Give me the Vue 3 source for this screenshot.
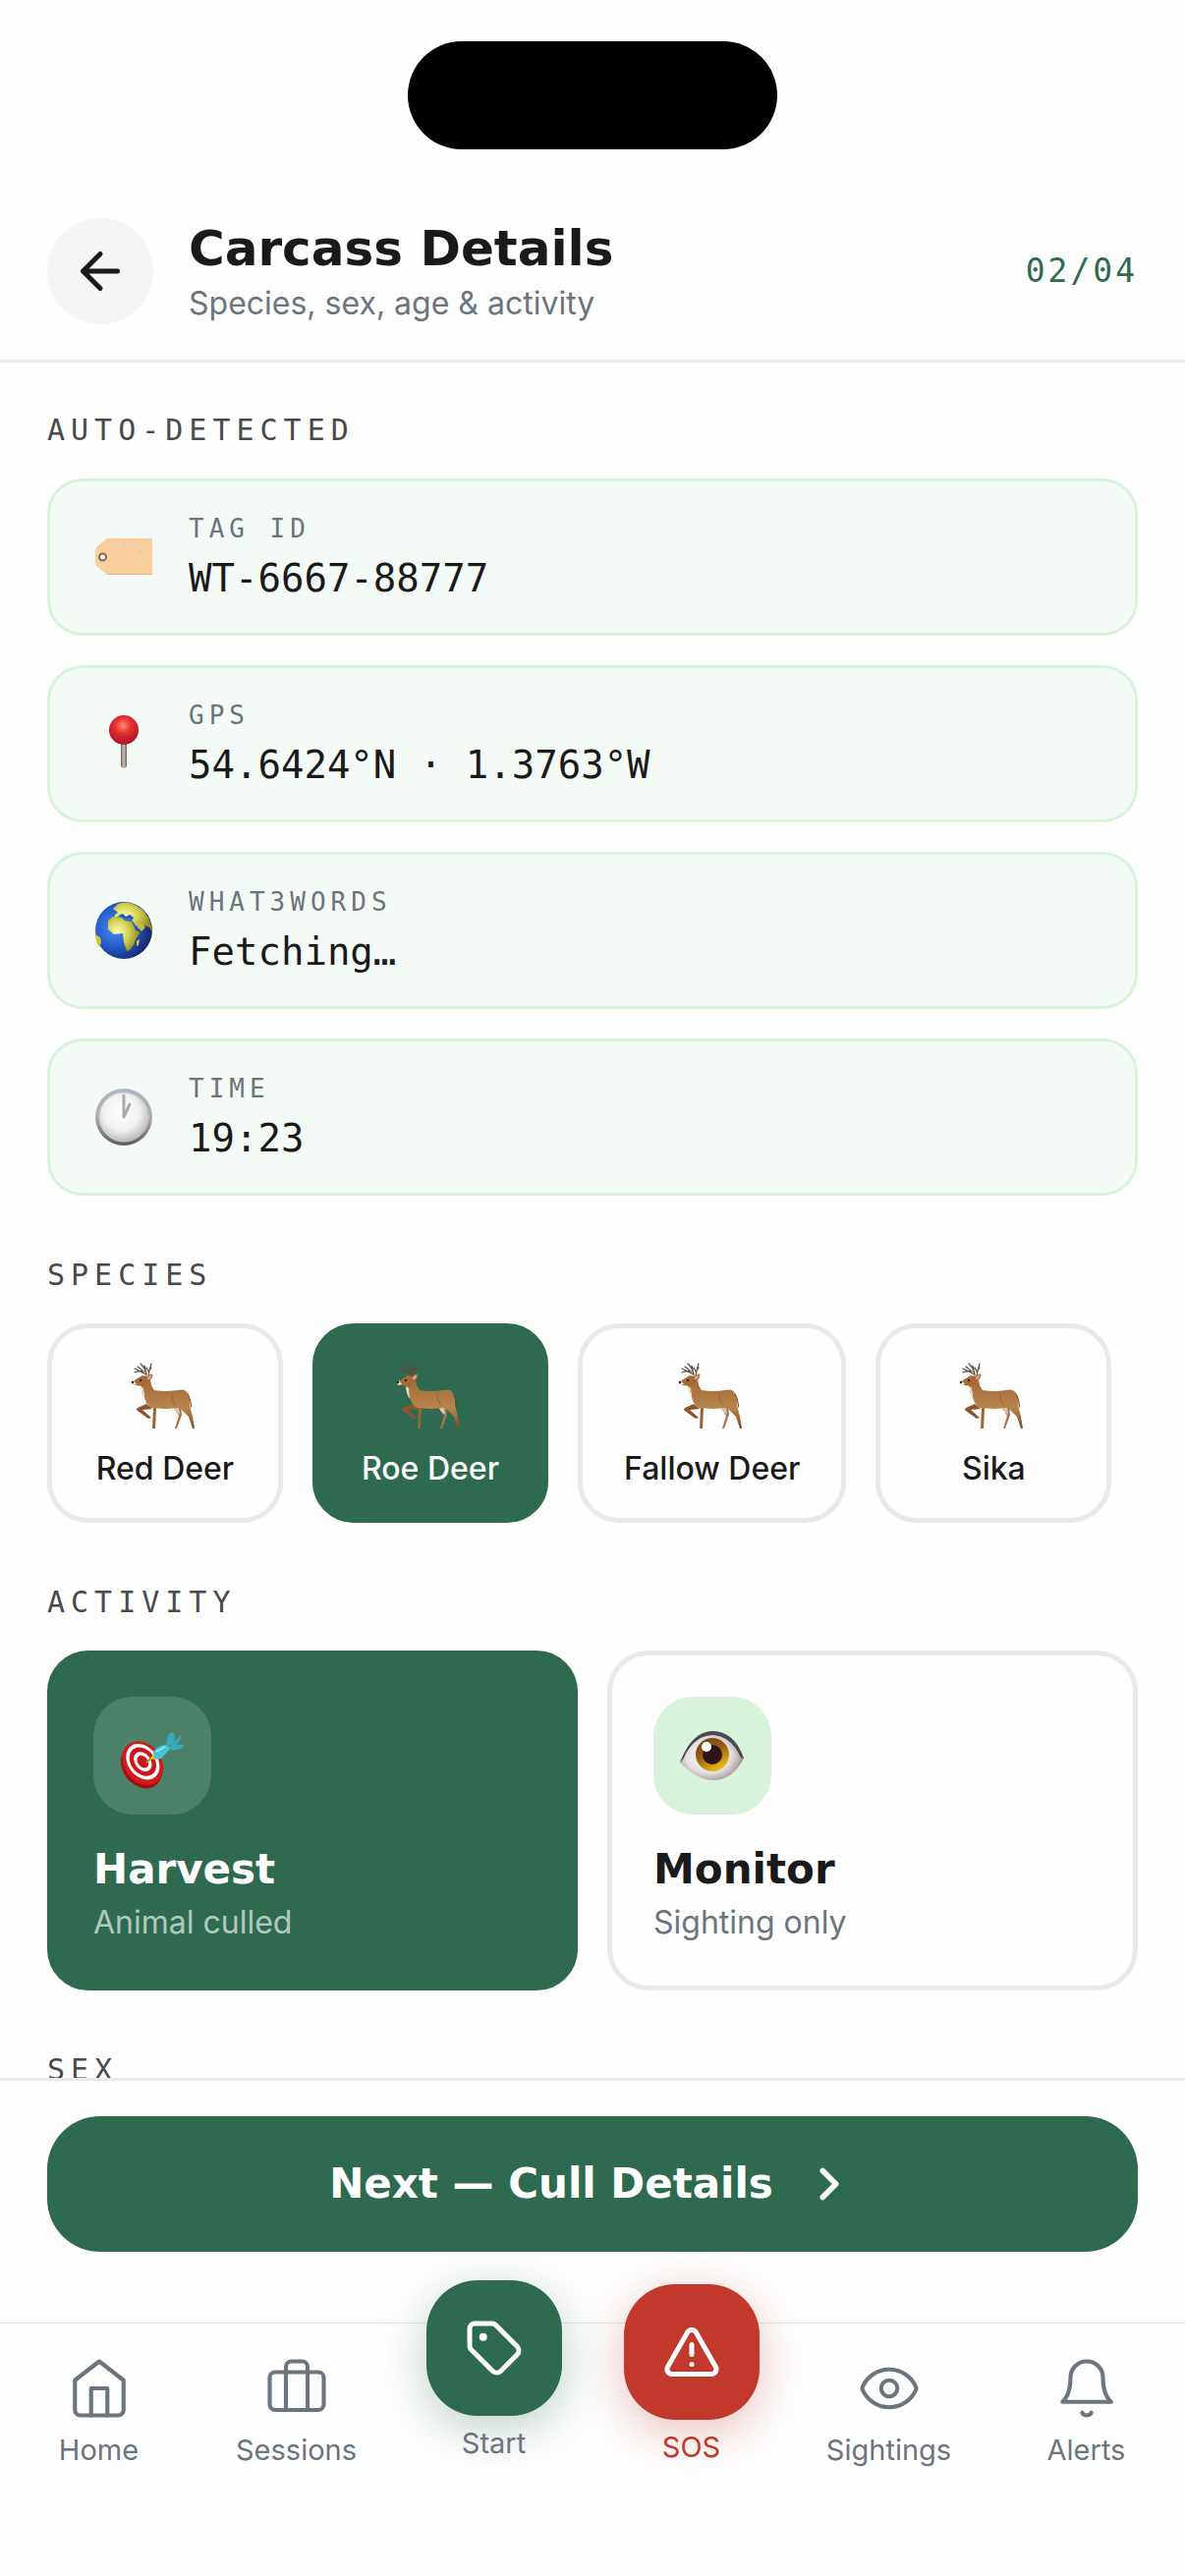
<script setup>
import { ref } from 'vue'

const detected = [
  { icon: 'tag', label: 'TAG ID', value: 'WT-6667-88777' },
  { icon: 'pin', label: 'GPS', value: '54.6424°N · 1.3763°W' },
  { icon: 'globe', label: 'WHAT3WORDS', value: 'Fetching…' },
  { icon: 'clock', label: 'TIME', value: '19:23' },
]

const speciesList = ['Red Deer', 'Roe Deer', 'Fallow Deer', 'Sika']
const species = ref('Roe Deer')

const activities = [
  { id: 'harvest', title: 'Harvest', note: 'Animal culled' },
  { id: 'monitor', title: 'Monitor', note: 'Sighting only' },
]
const activity = ref('harvest')
</script>

<template>
  <div class="screen">
    <svg class="defs" width="0" height="0" aria-hidden="true">
      <defs>
        <linearGradient id="coat" x1="0" y1="0" x2="0" y2="1">
          <stop offset="0" stop-color="#a06a38" />
          <stop offset="0.6" stop-color="#b9834c" />
          <stop offset="1" stop-color="#7d4a20" />
        </linearGradient>
        <radialGradient id="ball" cx="0.48" cy="0.35" r="0.65">
          <stop offset="0" stop-color="#ff8a78" />
          <stop offset="0.4" stop-color="#e8322f" />
          <stop offset="1" stop-color="#a80f24" />
        </radialGradient>
        <linearGradient id="needle">
          <stop offset="0" stop-color="#6d5f59" />
          <stop offset="0.5" stop-color="#d3c4bb" />
          <stop offset="1" stop-color="#6d5f59" />
        </linearGradient>
        <radialGradient id="sea" cx="0.35" cy="0.45" r="0.65">
          <stop offset="0" stop-color="#4a8df0" />
          <stop offset="0.55" stop-color="#2459c8" />
          <stop offset="1" stop-color="#142766" />
        </radialGradient>
        <radialGradient id="land" cx="0.3" cy="0.45" r="0.7">
          <stop offset="0" stop-color="#fbffb8" />
          <stop offset="0.5" stop-color="#d3d14e" />
          <stop offset="1" stop-color="#8d8120" />
        </radialGradient>
        <linearGradient id="rim" x1="0" y1="0" x2="0" y2="1">
          <stop offset="0" stop-color="#a9b8c6" />
          <stop offset="0.5" stop-color="#b5aba7" />
          <stop offset="1" stop-color="#5e5e5e" />
        </linearGradient>
        <radialGradient id="dial" cx="0.45" cy="0.4" r="0.62">
          <stop offset="0" stop-color="#ffffff" />
          <stop offset="0.6" stop-color="#f1f1f1" />
          <stop offset="1" stop-color="#b5b5b5" />
        </radialGradient>
        <linearGradient id="iris" x1="0" y1="0" x2="0.5" y2="1">
          <stop offset="0" stop-color="#6a4420" />
          <stop offset="0.5" stop-color="#93590f" />
          <stop offset="1" stop-color="#e5b70d" />
        </linearGradient>
        <radialGradient id="sclera" cx="0.45" cy="0.5" r="0.6">
          <stop offset="0" stop-color="#ffffff" />
          <stop offset="0.6" stop-color="#e4dde0" />
          <stop offset="1" stop-color="#8d7d83" />
        </radialGradient>
      </defs>
    </svg>

    <div class="status-bar"><div class="island"></div></div>

    <header class="header">
      <button class="back" type="button" aria-label="Back">
        <svg viewBox="0 0 24 24" width="60" height="60" class="line" stroke-width="2"><path d="M19 12H5M12 19l-7-7 7-7" /></svg>
      </button>
      <div class="heading">
        <h1>Carcass Details</h1>
        <p>Species, sex, age &amp; activity</p>
      </div>
      <span class="step">02/04</span>
    </header>

    <main class="content">
      <section>
        <h2>AUTO-DETECTED</h2>
        <dl class="detected">
          <div v-for="row in detected" :key="row.label" class="info">
            <svg v-if="row.icon === 'tag'" viewBox="0 0 60 60" width="60" height="60" aria-hidden="true">
              <path d="M13 11h46v37H13L3 40q-2-2-2-5V24q0-3 2-5z" fill="#f9cfa0" />
              <path d="M13 47h46v1H13z" fill="#e9b988" />
              <circle cx="8.5" cy="30" r="3.5" fill="#fff" stroke="#8d6150" stroke-width="2" />
              <g fill="#eec090"><circle cx="31" cy="17" r="1" /><circle cx="47" cy="24" r="1" /><circle cx="42" cy="42" r="1" /><circle cx="24" cy="38" r="1" /></g>
            </svg>
            <svg v-else-if="row.icon === 'pin'" viewBox="0 0 60 60" width="60" height="60" aria-hidden="true">
              <path d="M27 28h6v25q-3 4-6 0z" fill="url(#needle)" />
              <circle cx="30" cy="16" r="15" fill="url(#ball)" />
              <path d="M27 22h6v8h-6z" fill="#a52a35" opacity="0.5" />
            </svg>
            <svg v-else-if="row.icon === 'globe'" viewBox="0 0 60 60" width="60" height="60" aria-hidden="true">
              <circle cx="30" cy="30" r="29" fill="url(#sea)" />
              <path d="M19 8l5-5q8-3 15 0 11 4 16 14 4 8 4 15l-3-5-5-2-4 2-5-2-4-6-6-1-4-3-4 1-4 2 1-4 3-2-2-2z" fill="url(#land)" />
              <path d="M42 20l5 1 5 6-4 4-4-4z" fill="#c2bd3c" />
              <path d="M14 20l5-4 9 1 3 3 7 1 4 9 5 2-5 7-2 6-4 5-3 1-3-9-1-9-9 1-6-5z" fill="url(#land)" />
              <path d="M43 41l3-2-1 6-2 1zM1 34l5 3 1 5-2 5q-4-6-4-13z" fill="#d8c530" />
              <path d="M24 15l5-2 3 3 4-2 4 3-1 2-7-1-5-2z" fill="#2056b8" />
            </svg>
            <svg v-else viewBox="0 0 60 60" width="60" height="60" aria-hidden="true">
              <circle cx="30" cy="30" r="29" fill="url(#rim)" />
              <circle cx="30" cy="30" r="25" fill="url(#dial)" stroke="#c7c9cb" stroke-width="1" />
              <path d="M30 8v22M30 30l6-13" fill="none" stroke="#a9abad" stroke-width="3" stroke-linecap="round" />
            </svg>
            <div class="info-text">
              <dt>{{ row.label }}</dt>
              <dd>{{ row.value }}</dd>
            </div>
          </div>
        </dl>
      </section>

      <section>
        <h2>SPECIES</h2>
        <div class="species">
          <button
            v-for="name in speciesList"
            :key="name"
            type="button"
            class="species-card"
            :class="{ selected: species === name }"
            :aria-pressed="species === name"
            @click="species = name"
          >
            <svg class="spill" viewBox="1 -2 66 72" width="66" height="72" aria-hidden="true">
              <g fill="none" stroke="#5d4e44" stroke-width="1.2" stroke-linecap="round">
                <path d="M15 13Q15 7 9 1M15 12Q9 9 3 6M13 9Q8 8 3 10M11 8L6 4M17 13q1-6 3-12M18 8l2-3M14 7l-1-4M17 9l-2-4" />
              </g>
              <path d="M42 45l8-1 1 9-5 14h-2l4-13z" fill="#a5754e" />
              <path d="M42 45l6 1 1 7-4-3z" fill="#d9c8b5" />
              <path d="M22 46h3l-1 21h-3z" fill="#996337" />
              <path d="M15 42L6 46q-2 2 0 3l11 8 3-1-9-8 10-1z" fill="#8d552b" />
              <path d="M8 22l3-5 8-1q0 7 4 12 11 2 24 0 8-2 11 5 2 5 1 10l3 12 2 12h-2l-4-12-9-9-14 1-15-1q-6-4-7-11 0-7-5-13z" fill="url(#coat)" />
              <path d="M41 31q-1 7 4 13" fill="none" stroke="#8a5426" stroke-width="1" opacity="0.6" />
              <path d="M9 24l3 2 1 11q-4-6-4-13z" fill="#e9d8c4" />
              <path d="M57 31q4 6 4 15l-1-1q0-7-3-13z" fill="#70431f" />
              <path d="M1 19l5-3 5-3 6 1q2 3-1 7l-4 3-8-1-4-2z" fill="#a76a35" />
              <path d="M0 20l2-2 3 4-4 1z" fill="#f3e8dd" />
              <circle cx="1" cy="20" r="1.3" fill="#2b211c" />
              <circle cx="9" cy="18" r="1.2" fill="#2b211c" />
              <path d="M15 17q1-5 6-5 0 5-4 6z" fill="#e2a18b" stroke="#9a6135" stroke-width="1" />
            </svg>
            <span>{{ name }}</span>
          </button>
        </div>
      </section>

      <section>
        <h2>ACTIVITY</h2>
        <div class="activities">
          <button
            v-for="item in activities"
            :key="item.id"
            type="button"
            class="activity-card"
            :class="{ selected: activity === item.id }"
            :aria-pressed="activity === item.id"
            @click="activity = item.id"
          >
            <span class="badge">
              <svg v-if="item.id === 'harvest'" class="spill" viewBox="0 -8 66 64" width="66" height="64" aria-hidden="true">
                <g transform="rotate(-38 23 33)">
                  <ellipse cx="21" cy="34" rx="19" ry="24" fill="#9d0d12" />
                  <ellipse cx="24" cy="32" rx="19" ry="24" fill="#d2191d" />
                  <ellipse cx="25" cy="31" rx="15" ry="20" fill="#fff" />
                  <ellipse cx="25" cy="31" rx="12" ry="16" fill="#c9181c" />
                  <ellipse cx="25" cy="31" rx="8" ry="11" fill="#fff" />
                  <ellipse cx="25" cy="31" rx="5" ry="7" fill="#c9181c" />
                </g>
                <path d="M27 31l8-7" stroke="#b9881a" stroke-width="2" />
                <path d="M31 28l4-8 5 7z" fill="#f0c808" />
                <path d="M34 20q5-7 14-7l4 3-10 11q-5 2-7-1z" fill="#45c6d6" />
                <path d="M47 13Q48 1 53 0q5 3 1 13zM51 14l11-11q1 5-6 11zM50 15q10-4 16-1-4 5-14 4z" fill="#38a9b9" />
                <path d="M37 20l9-5" stroke="#8aeaf2" stroke-width="2" />
              </svg>
              <svg v-else viewBox="0 0 66 50" width="66" height="50" aria-hidden="true">
                <path d="M0 32Q12 0 34 0q22 1 31 28-12 22-31 22Q18 50 0 32z" fill="url(#sclera)" />
                <path d="M0 32Q12 0 34 0q22 1 31 28l-3-1Q52 5 34 4 14 4 3 29z" fill="#4a4a50" />
                <circle cx="33" cy="24" r="17" fill="url(#iris)" />
                <circle cx="33" cy="24" r="10" fill="#2e1519" />
                <circle cx="27" cy="16" r="5" fill="#fff" />
              </svg>
            </span>
            <span class="activity-title">{{ item.title }}</span>
            <span class="activity-note">{{ item.note }}</span>
          </button>
        </div>
      </section>

      <section>
        <h2>SEX</h2>
      </section>
    </main>

    <div class="action-bar">
      <button class="next" type="button">
        <span>Next — Cull Details</span>
        <svg viewBox="0 0 24 24" width="54" height="54" class="line" stroke-width="2.5"><path d="M9 18l6-6-6-6" /></svg>
      </button>
    </div>

    <nav class="tabs">
      <a href="#home" class="tab">
        <svg viewBox="0 0 24 24" width="66" height="66" class="line" stroke-width="1.5"><path d="M3 9l9-7 9 7v11a2 2 0 0 1-2 2H5a2 2 0 0 1-2-2z" /><path d="M9 22V12h6v10" /></svg>
        <span>Home</span>
      </a>
      <a href="#sessions" class="tab">
        <svg viewBox="0 0 24 24" width="66" height="66" class="line" stroke-width="1.5"><path d="M16 20V4a2 2 0 0 0-2-2h-4a2 2 0 0 0-2 2v16" /><rect x="2" y="6" width="20" height="14" rx="2" /></svg>
        <span>Sessions</span>
      </a>
      <a href="#start" class="tab raised start">
        <span class="fab">
          <svg viewBox="0 0 24 24" width="60" height="60" class="line" stroke-width="2"><path d="M12.586 2.586A2 2 0 0 0 11.172 2H4a2 2 0 0 0-2 2v7.172a2 2 0 0 0 .586 1.414l8.704 8.704a2.426 2.426 0 0 0 3.42 0l6.58-6.58a2.426 2.426 0 0 0 0-3.42z" /><circle cx="7.5" cy="7.5" r="0.6" fill="currentColor" /></svg>
        </span>
        <span>Start</span>
      </a>
      <a href="#sos" class="tab raised sos">
        <span class="fab">
          <svg viewBox="0 0 24 24" width="60" height="60" class="line" stroke-width="2"><path d="M21.73 18l-8-14a2 2 0 0 0-3.48 0l-8 14A2 2 0 0 0 4 21h16a2 2 0 0 0 1.73-3z" /><path d="M12 9v4M12 17h.01" /></svg>
        </span>
        <span>SOS</span>
      </a>
      <a href="#sightings" class="tab">
        <svg viewBox="0 0 24 24" width="66" height="66" class="line" stroke-width="1.5"><path d="M2.062 12.348a1 1 0 0 1 0-.696 10.75 10.75 0 0 1 19.876 0 1 1 0 0 1 0 .696 10.75 10.75 0 0 1-19.876 0" /><circle cx="12" cy="12" r="3" /></svg>
        <span>Sightings</span>
      </a>
      <a href="#alerts" class="tab">
        <svg viewBox="0 0 24 24" width="66" height="66" class="line" stroke-width="1.5"><path d="M6 8a6 6 0 0 1 12 0c0 7 3 9 3 9H3s3-2 3-9" /><path d="M10.3 21a1.94 1.94 0 0 0 3.4 0" /></svg>
        <span>Alerts</span>
      </a>
    </nav>
  </div>
</template>

<style>
body {
  margin: 0;
  background: #fefefe;
}
</style>

<style scoped>
.screen {
  --green: #2d6a4f;
  --red: #c0392b;
  --ink: #1a1a1a;
  --muted: #6c757d;
  --rule: #e9e9e9;
  --display: "DejaVu Sans", sans-serif;
  --mono: "DejaVu Sans Mono", monospace;
  display: flex;
  flex-direction: column;
  height: 100vh;
  background: #fefefe;
  color: var(--ink);
  font-family: Inter, sans-serif;
}
.screen * {
  box-sizing: border-box;
}
.defs {
  position: absolute;
}
.line {
  fill: none;
  stroke: currentColor;
  stroke-linecap: round;
  stroke-linejoin: round;
}
svg {
  display: block;
  flex: none;
}
button {
  margin: 0;
  border: 0;
  font-family: inherit;
  color: inherit;
  cursor: pointer;
}

.status-bar {
  flex: none;
  height: 186px;
  padding-top: 42px;
}
.island {
  width: 376px;
  height: 110px;
  margin: 0 auto;
  border-radius: 55px;
  background: #000;
}

.header {
  flex: none;
  display: flex;
  align-items: center;
  gap: 36px;
  padding: 35px 48px;
  border-bottom: 3px solid var(--rule);
}
.back {
  display: flex;
  align-items: center;
  justify-content: center;
  width: 108px;
  height: 108px;
  padding: 0;
  border-radius: 50%;
  background: #f5f5f5;
}
.heading {
  flex: 1;
  display: flex;
  flex-direction: column;
  gap: 4px;
  padding-top: 2px;
}
h1 {
  margin: 0;
  font: 700 50px/60px var(--display);
}
.heading p {
  margin: 0;
  font-size: 32px;
  line-height: 44px;
  color: var(--muted);
}
.step {
  font: 33px/44px var(--mono);
  letter-spacing: 3px;
  color: var(--green);
}

.content {
  flex: 1;
  min-height: 0;
  overflow: hidden auto;
  scrollbar-width: none;
  display: flex;
  flex-direction: column;
  gap: 60px;
  padding: 48px 48px 0;
}
h2 {
  margin: 0 0 28px;
  font: 400 30px/42px var(--mono);
  letter-spacing: 6px;
  color: #4a4a4a;
}
.detected {
  display: flex;
  flex-direction: column;
  gap: 30px;
  margin: 0;
}
.info {
  display: flex;
  align-items: center;
  gap: 36px;
  padding: 30px 45px;
  border: 3px solid #d8f3dc;
  border-radius: 36px;
  background: #f4faf6;
}
.info-text {
  display: flex;
  flex-direction: column;
  gap: 8px;
}
dt {
  font: 26px/36px var(--mono);
  letter-spacing: 5px;
  color: var(--muted);
}
dd {
  margin: 0;
  font: 39px/50px var(--mono);
}

.species {
  display: flex;
  gap: 30px;
}
.species-card {
  display: flex;
  flex-direction: column;
  align-items: center;
  gap: 18px;
  min-width: 240px;
  padding: 33px 42px 30px;
  border: 5px solid var(--rule);
  border-radius: 42px;
  background: none;
  font-size: 32px;
  font-weight: 500;
  line-height: 40px;
  white-space: nowrap;
}
.spill {
  overflow: visible;
}
.selected {
  border-color: var(--green);
  background: var(--green);
  color: #fff;
}

.activities {
  display: grid;
  grid-template-columns: 1fr 1fr;
  gap: 30px;
}
.activity-card {
  display: flex;
  flex-direction: column;
  align-items: flex-start;
  padding: 42px;
  border: 5px solid var(--rule);
  border-radius: 42px;
  background: none;
}
.activity-card.selected {
  border-color: var(--green);
  background: var(--green);
}
.badge {
  display: flex;
  align-items: center;
  justify-content: center;
  width: 120px;
  height: 120px;
  border-radius: 40px;
  background: #d8f3dc;
}
.selected .badge {
  background: rgba(255, 255, 255, 0.15);
}
.activity-title {
  margin: 30px 0 6px;
  font: 700 42px/52px var(--display);
}
.activity-note {
  font-size: 32px;
  line-height: 44px;
  color: var(--muted);
}
.selected .activity-note {
  color: rgba(255, 255, 255, 0.65);
}

.action-bar {
  flex: none;
  padding: 36px 48px 72px;
  border-top: 3px solid var(--rule);
}
.next {
  display: flex;
  align-items: center;
  justify-content: center;
  gap: 30px;
  width: 100%;
  height: 138px;
  border-radius: 54px;
  background: var(--green);
  color: #fff;
  font: 700 42px/54px var(--display);
}

.tabs {
  flex: none;
  display: grid;
  grid-template-columns: repeat(6, 1fr);
  padding-bottom: 108px;
  border-top: 1px solid #e2e2e2;
}
.tab {
  display: flex;
  flex-direction: column;
  align-items: center;
  gap: 10px;
  padding-top: 33px;
  color: var(--muted);
  font-size: 29px;
  line-height: 40px;
  text-decoration: none;
}
.raised {
  gap: 8px;
  padding-top: 0;
}
.start {
  margin-top: -44px;
}
.sos {
  margin-top: -40px;
  color: var(--red);
}
.fab {
  display: flex;
  align-items: center;
  justify-content: center;
  width: 138px;
  height: 138px;
  border-radius: 52px;
  background: var(--green);
  color: #fff;
  box-shadow: 0 12px 48px rgba(45, 106, 79, 0.3);
}
.sos .fab {
  background: var(--red);
  box-shadow: 0 12px 48px rgba(192, 57, 43, 0.3);
}
</style>
